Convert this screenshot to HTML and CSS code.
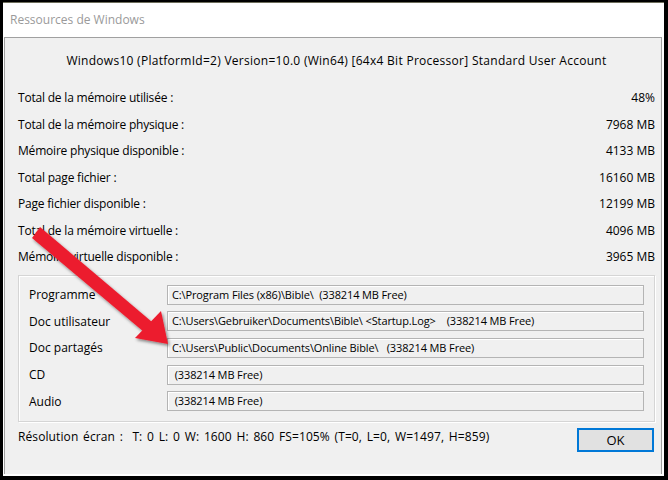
FILE: index.html
```html
<!DOCTYPE html>
<html lang="fr">
<head>
<meta charset="utf-8">
<title>Ressources de Windows</title>
<link rel="stylesheet" href="styles.css">
</head>
<body>
<div class="window">
  <div class="titlebar">Ressources de Windows</div>
  <div class="client">
    <div class="sysinfo">Windows10 (PlatformId=2) Version=10.0 (Win64) [64x4 Bit Processor] Standard User Account</div>
    <div class="stats">
      <div class="row"><span class="lbl">Total de la mémoire utilisée :</span><span>48%</span></div>
      <div class="row"><span class="lbl">Total de la mémoire physique :</span><span>7968 MB</span></div>
      <div class="row"><span class="lbl">Mémoire physique disponible :</span><span>4133 MB</span></div>
      <div class="row"><span class="lbl">Total page fichier :</span><span>16160 MB</span></div>
      <div class="row"><span class="lbl">Page fichier disponible :</span><span>12199 MB</span></div>
      <div class="row"><span class="lbl">Total de la mémoire virtuelle :</span><span>4096 MB</span></div>
      <div class="row"><span class="lbl">Mémoire virtuelle disponible :</span><span>3965 MB</span></div>
    </div>
    <div class="group">
      <div class="grow"><span class="glabel">Programme</span><div class="field">C:\Program Files (x86)\Bible\  (338214 MB Free)</div></div>
      <div class="grow"><span class="glabel">Doc utilisateur</span><div class="field">C:\Users\Gebruiker\Documents\Bible\ &lt;Startup.Log&gt;    (338214 MB Free)</div></div>
      <div class="grow"><span class="glabel">Doc partagés</span><div class="field">C:\Users\Public\Documents\Online Bible\   (338214 MB Free)</div></div>
      <div class="grow"><span class="glabel">CD</span><div class="field"> (338214 MB Free)</div></div>
      <div class="grow"><span class="glabel">Audio</span><div class="field"> (338214 MB Free)</div></div>
    </div>
    <div class="footer">
      <span class="res">Résolution écran :&nbsp; T: 0 L: 0 W: 1600 H: 860 FS=105% (T=0, L=0, W=1497, H=859)</span>
      <button class="ok">OK</button>
    </div>
  </div>
  <svg class="arrow" width="668" height="480" viewBox="0 0 668 480">
    <defs>
      <filter id="sh" x="-20%" y="-20%" width="140%" height="140%">
        <feDropShadow dx="1.5" dy="2" stdDeviation="1.5" flood-color="#000" flood-opacity="0.45"/>
      </filter>
    </defs>
    <g filter="url(#sh)" fill="#ec1c2e" stroke="none">
      <path d="M32 238 L40 227 L152 322 L144 332 Z"/>
      <polygon points="168,344 135,338 161,311"/>
    </g>
  </svg>
</div>
</body>
</html>
```
FILE: styles.css
```css
html, body {
  margin: 0;
  padding: 0;
  background: #000;
}
body {
  width: 668px;
  height: 480px;
  overflow: hidden;
  font-family: "Open Sans", "Noto Sans", sans-serif;
  font-size: 12px;
  color: #000;
}
.window {
  position: relative;
  margin: 2px 4px 0 3px;
  width: 661px;
  height: 473px;
  border-top: 1px solid #6e6e5c;
  background: #fff;
  display: flex;
  flex-direction: column;
}
.titlebar {
  height: 34px;
  line-height: 33px;
  padding-left: 7px;
  color: #9a9a9a;
  font-size: 12px;
  background: #fff;
}
.client {
  flex: 1;
  margin: 0 2px 2px 1px;
  background: #f0f0f0;
  border-top: 1px solid #a0a0a0;
  border-left: 1px solid #a0a0a0;
  border-right: 1px solid #a0a0a0;
  display: flex;
  flex-direction: column;
  padding: 0 6px 0 13px;
}
.sysinfo {
  text-align: center;
  height: 20px;
  line-height: 20px;
  margin-top: 13px;
  letter-spacing: 0.28px;
}
.stats {
  margin-top: 14px;
  display: flex;
  flex-direction: column;
}
.row {
  display: flex;
  justify-content: space-between;
  height: 26.5px;
  line-height: 26.5px;
}
.lbl {
  letter-spacing: -0.2px;
}
.group {
  margin-top: 4px;
  border: 1px solid #d5d5d5;
  box-shadow: inset 1px 1px 0 #fff, 1px 1px 0 #fff;
  padding: 9px 10px 10px 10px;
  display: flex;
  flex-direction: column;
  gap: 6.7px;
}
.grow {
  display: flex;
  align-items: center;
  height: 20px;
}
.glabel {
  width: 138px;
  flex: none;
}
.field {
  flex: 1;
  height: 18px;
  line-height: 18px;
  border: 1px solid #b4b4b4;
  box-shadow: inset 1px 1px 0 #fff;
  padding-left: 4px;
  font-size: 11px;
  letter-spacing: -0.12px;
  white-space: pre;
}
.footer {
  margin-top: 6px;
  display: flex;
  justify-content: space-between;
  align-items: flex-start;
}
.res {
  margin-top: 1px;
  line-height: 16px;
  letter-spacing: 0.1px;
  word-spacing: 1.5px;
}
.ok {
  width: 77px;
  height: 24px;
  margin-right: 1px;
  border: 2px solid #0078d7;
  background: #e1e1e1;
  font-family: inherit;
  font-size: 13px;
  color: #000;
  padding: 0;
}
.arrow {
  position: absolute;
  left: -3px;
  top: -3px;
  pointer-events: none;
}
```
